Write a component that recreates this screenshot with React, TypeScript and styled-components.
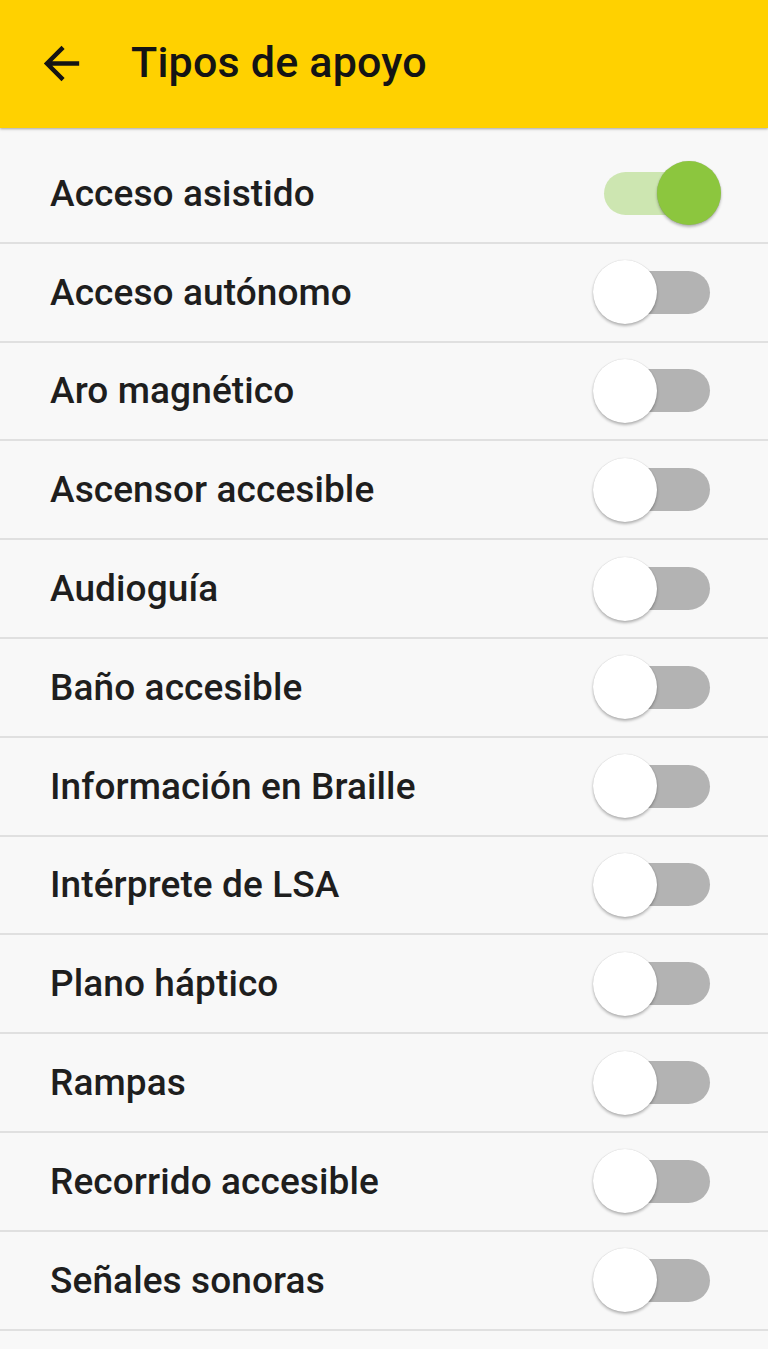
import { useState } from "react";
import styled, { createGlobalStyle } from "styled-components";

const GlobalStyle = createGlobalStyle`
  html, body {
    margin: 0;
    padding: 0;
    background: #f8f8f8;
  }
  body {
    font-family: Roboto, "Noto Sans", sans-serif;
  }
`;

const Page = styled.div`
  width: 768px;
  min-height: 1349px;
  background: #f8f8f8;
  overflow: hidden;
`;

const Toolbar = styled.header`
  height: 128px;
  background: #ffd100;
  display: flex;
  align-items: center;
  box-shadow: 0 1px 2px rgba(0, 0, 0, 0.25), 0 2px 3px rgba(0, 0, 0, 0.08);
  position: relative;
  z-index: 1;
`;

const BackButton = styled.button`
  width: 54px;
  height: 54px;
  margin-left: 34px;
  margin-top: -2px;
  padding: 0;
  border: none;
  background: transparent;
  display: flex;
  align-items: center;
  justify-content: center;
  color: #141414;
`;

const Title = styled.h1`
  margin: -4px 0 0 43px;
  font-size: 43px;
  font-weight: 500;
  color: #141414;
  letter-spacing: 0.2px;
`;

const List = styled.ul`
  list-style: none;
  margin: 0;
  padding: 17px 0 0;
`;

const Row = styled.li`
  height: 96.8px;
  border-bottom: 2px solid #e0e0e0;
  display: flex;
  align-items: center;
  justify-content: space-between;
  padding: 0 48px 0 50px;
`;

const Label = styled.span`
  font-size: 37px;
  font-weight: 500;
  color: #1e1e1e;
  letter-spacing: 0.1px;
`;

const Track = styled.button<{ $on: boolean }>`
  position: relative;
  width: 106px;
  height: 43px;
  padding: 0;
  border: none;
  border-radius: 22px;
  background: ${(p) => (p.$on ? "#cde6b1" : "#b3b3b3")};
  cursor: pointer;
  margin-right: 10px;
`;

const Thumb = styled.span<{ $on: boolean }>`
  position: absolute;
  top: 50%;
  left: ${(p) => (p.$on ? "53px" : "-11px")};
  width: 64px;
  height: 64px;
  margin-top: -32px;
  border-radius: 50%;
  background: ${(p) => (p.$on ? "#8cc63e" : "#ffffff")};
  box-shadow: 0 2px 3px rgba(0, 0, 0, 0.28), 0 0 1px rgba(0, 0, 0, 0.2);
`;

const items = [
  "Acceso asistido",
  "Acceso autónomo",
  "Aro magnético",
  "Ascensor accesible",
  "Audioguía",
  "Baño accesible",
  "Información en Braille",
  "Intérprete de LSA",
  "Plano háptico",
  "Rampas",
  "Recorrido accesible",
  "Señales sonoras",
];

const App = () => {
  const [checked, setChecked] = useState<Record<string, boolean>>({
    "Acceso asistido": true,
  });

  const toggle = (name: string) => {
    setChecked({ ...checked, [name]: !checked[name] });
  };

  return (
    <Page>
      <GlobalStyle />
      <Toolbar>
        <BackButton aria-label="Volver">
          <svg width="53" height="53" viewBox="0 0 24 24" fill="currentColor">
            <path d="M20 11H7.83l5.59-5.59L12 4l-8 8 8 8 1.41-1.41L7.83 13H20v-2z" />
          </svg>
        </BackButton>
        <Title>Tipos de apoyo</Title>
      </Toolbar>

      <List>
        {items.map((name) => (
          <Row key={name}>
            <Label>{name}</Label>
            <Track $on={!!checked[name]} onClick={() => toggle(name)} aria-label={name}>
              <Thumb $on={!!checked[name]} />
            </Track>
          </Row>
        ))}
      </List>
    </Page>
  );
};

export default App;
